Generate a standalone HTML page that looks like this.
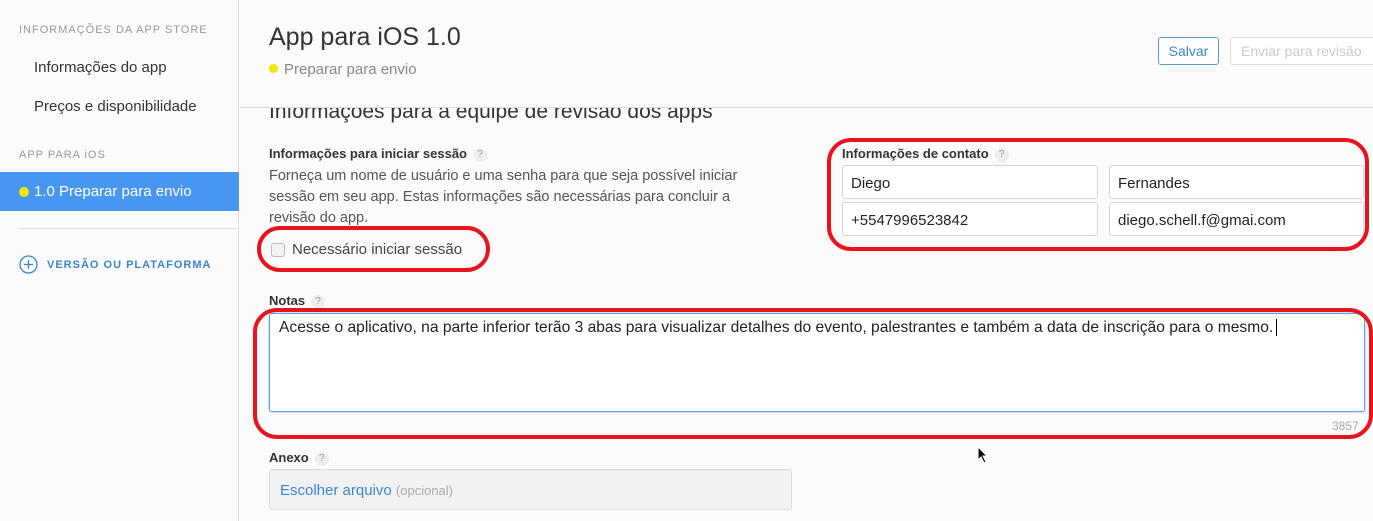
<!DOCTYPE html>
<html><head><meta charset="utf-8"><style>
*{margin:0;padding:0;box-sizing:border-box}
body{width:1373px;height:521px;overflow:hidden;background:#fbfbfb;font-family:"Liberation Sans",sans-serif;color:#333;position:relative}
.a{position:absolute;white-space:nowrap}
.side{left:0;top:0;width:239px;height:521px;border-right:1px solid #e2e2e2;background:#fbfbfb}
.cap{font-size:11px;letter-spacing:1px;color:#999}
.item{font-size:15px;color:#333}
.lbl{font-size:13px;font-weight:bold;color:#333}
.q{display:inline-block;width:14px;height:14px;border-radius:7px;background:#eee;color:#999;font-size:10px;text-align:center;line-height:14px;font-weight:normal;margin-left:6px;vertical-align:1px}
.inp{background:#fff;border:1px solid #d6d6d6;border-radius:3px;height:34px;font-size:15px;padding:9px 8px;color:#222}
.red{border:4px solid #e8141c;border-radius:24px}
</style></head><body>
<div class="a side"></div>
<div class="a cap" style="left:19px;top:24px">INFORMAÇÕES DA APP STORE</div>
<div class="a item" style="left:34px;top:59px">Informações do app</div>
<div class="a item" style="left:34px;top:98px">Preços e disponibilidade</div>
<div class="a cap" style="left:19px;top:149px">APP PARA iOS</div>
<div class="a" style="left:0;top:172px;width:239px;height:39px;background:#4896f0"></div>
<div class="a" style="left:19px;top:187px;width:10px;height:10px;border-radius:5px;background:#f4e409"></div>
<div class="a" style="left:34px;top:183px;font-size:15px;color:#fff">1.0 Preparar para envio</div>
<div class="a" style="left:19px;top:228px;width:220px;height:1px;background:#e2e2e2"></div>
<svg class="a" style="left:19px;top:255px" width="19" height="19" viewBox="0 0 19 19"><circle cx="9.5" cy="9.5" r="8.5" fill="none" stroke="#3a86cc" stroke-width="1.3"/><path d="M9.5 5v9M5 9.5h9" stroke="#3a86cc" stroke-width="1.3"/></svg>
<div class="a" style="left:47px;top:259px;font-size:11px;font-weight:bold;letter-spacing:1px;color:#3a86cc">VERSÃO OU PLATAFORMA</div>

<div class="a" style="left:269px;top:99px;font-size:21px;color:#333;line-height:25px">Informações para a equipe de revisão dos apps</div>
<div class="a" style="left:240px;top:0;width:1133px;height:108px;background:#fbfbfb;border-bottom:1px solid #ddd"></div>
<div class="a" style="left:269px;top:23px;font-size:25px;color:#333">App para iOS 1.0</div>
<div class="a" style="left:269px;top:64px;width:9px;height:9px;border-radius:5px;background:#f4e409"></div>
<div class="a" style="left:284px;top:61px;font-size:15px;color:#888">Preparar para envio</div>
<div class="a" style="left:1158px;top:37px;width:61px;height:28px;border:1px solid #5a9bd5;border-radius:3px;color:#3a86cc;font-size:14px;text-align:center;line-height:26px;background:#fff">Salvar</div>
<div class="a" style="left:1230px;top:37px;width:150px;height:28px;border:1px solid #ddd;border-radius:3px;color:#ccc;font-size:14px;padding-left:10px;line-height:26px;background:#fff">Enviar para revisão</div>

<div class="a lbl" style="left:269px;top:146px">Informações para iniciar sessão<span class="q">?</span></div>
<div class="a" style="left:269px;top:166px;font-size:14.5px;line-height:21px;color:#555;white-space:normal;width:500px">Forneça um nome de usuário e uma senha para que seja possível iniciar sessão em seu app. Estas informações são necessárias para concluir a revisão do app.</div>
<div class="a" style="left:271px;top:243px;width:14px;height:14px;border:1px solid #bbb;border-radius:3px;background:#f3f3f3"></div>
<div class="a" style="left:292px;top:241px;font-size:15px;color:#444">Necessário iniciar sessão</div>
<div class="a red" style="left:257px;top:226px;width:233px;height:46px"></div>

<div class="a lbl" style="left:842px;top:146px">Informações de contato<span class="q">?</span></div>
<div class="a inp" style="left:842px;top:165px;width:256px">Diego</div>
<div class="a inp" style="left:1109px;top:165px;width:255px">Fernandes</div>
<div class="a inp" style="left:842px;top:202px;width:256px">+5547996523842</div>
<div class="a inp" style="left:1109px;top:202px;width:255px">diego.schell.f@gmai.com</div>
<div class="a red" style="left:827px;top:138px;width:542px;height:113px"></div>

<div class="a lbl" style="left:269px;top:293px">Notas<span class="q">?</span></div>
<div class="a" style="left:269px;top:313px;width:1096px;height:99px;background:#fff;border:1px solid #5a9fe6;border-radius:3px;box-shadow:0 0 2px #8bbcf0;font-size:15.6px;padding:5px 9px;color:#222">Acesse o aplicativo, na parte inferior terão 3 abas para visualizar detalhes do evento, palestrantes e também a data de inscrição para o mesmo.<span style="border-left:1px solid #000;margin-left:3px"></span></div>
<div class="a" style="left:1332px;top:419px;font-size:12px;color:#aaa">3857</div>
<div class="a red" style="left:253px;top:308px;width:1120px;height:131px"></div>

<div class="a lbl" style="left:269px;top:450px">Anexo<span class="q">?</span></div>
<div class="a" style="left:269px;top:469px;width:523px;height:41px;background:#f2f2f4;border:1px solid #ddd;border-radius:3px;padding:12px 10px;font-size:15px;color:#3a86cc">Escolher arquivo <span style="font-size:13px;color:#aaa">(opcional)</span></div>
<svg class="a" style="left:977px;top:446px" width="12" height="18" viewBox="0 0 12 18"><path d="M1 1 L1 14 L4 11 L7 17 L9 16 L6 10 L10 10 Z" fill="#000" stroke="#fff" stroke-width="1"/></svg>
</body></html>
